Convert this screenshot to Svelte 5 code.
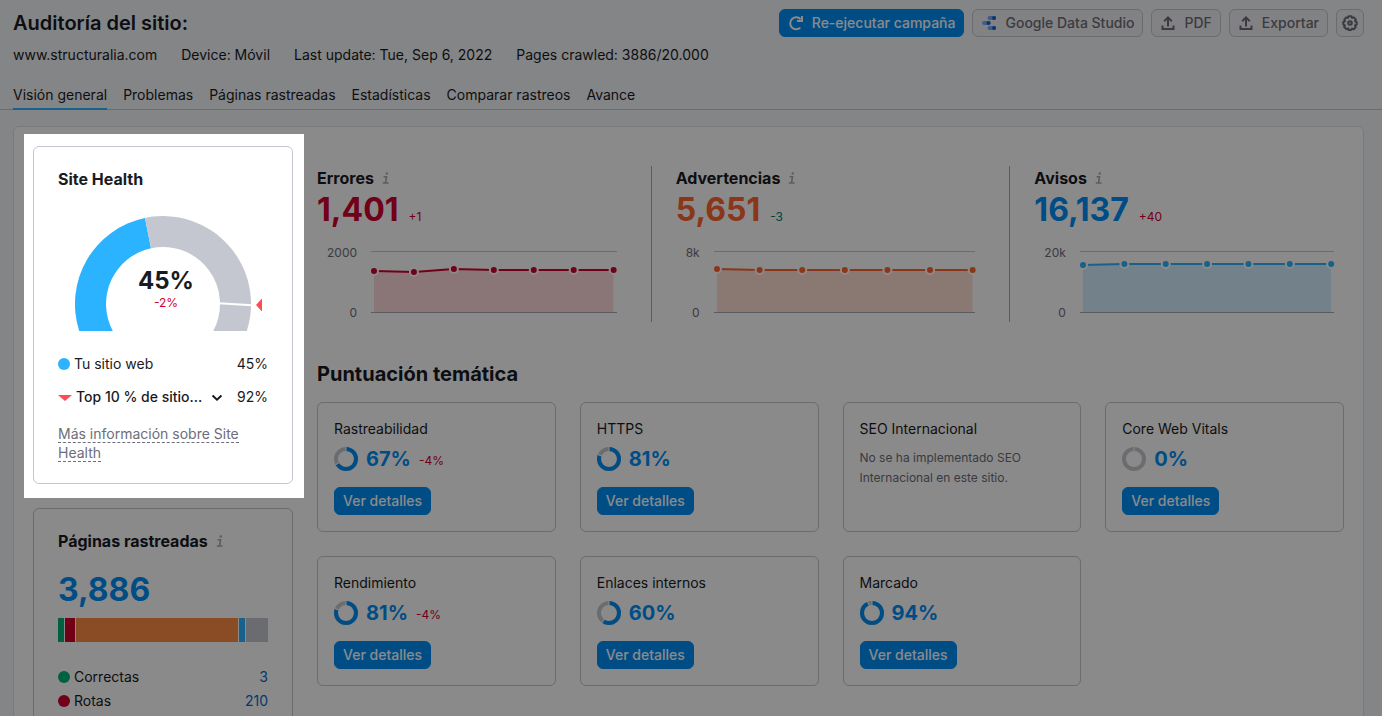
<script lang="ts">
  const details = [
    'www.structuralia.com',
    'Device: Móvil',
    'Last update: Tue, Sep 6, 2022',
    'Pages crawled: 3886/20.000',
  ];

  const tabs = [
    'Visión general',
    'Problemas',
    'Páginas rastreadas',
    'Estadísticas',
    'Comparar rastreos',
    'Avance',
  ];

  // points are distances from the top grid line, the plot is 60 high
  const stats = [
    { name: 'Errores', value: '1,401', diff: '+1', diffTone: 'bad', tone: 'red', max: '2000', points: [19, 20, 17, 18, 18, 18, 18] },
    { name: 'Advertencias', value: '5,651', diff: '-3', diffTone: 'good', tone: 'orange', max: '8k', points: [17, 18, 18, 18, 18, 18, 18] },
    { name: 'Avisos', value: '16,137', diff: '+40', diffTone: 'bad', tone: 'blue', max: '20k', points: [13, 12, 12, 12, 12, 12, 12] },
  ];

  const topics = [
    { name: 'Rastreabilidad', score: 67, diff: '-4%' },
    { name: 'HTTPS', score: 81 },
    { name: 'SEO Internacional', note: 'No se ha implementado SEO Internacional en este sitio.' },
    { name: 'Core Web Vitals', score: 0 },
    { name: 'Rendimiento', score: 81, diff: '-4%' },
    { name: 'Enlaces internos', score: 60 },
    { name: 'Marcado', score: 94 },
  ];

  const segments = [
    { color: '#00b37a', size: 6 },
    { color: '#d1002f', size: 10 },
    { color: '#ff8c43', size: 162 },
    { color: '#2bb3ff', size: 6 },
    { color: '#c4c7cf', size: 22 },
  ];

  const pages = [
    { name: 'Correctas', count: 3, color: '#00b37a' },
    { name: 'Rotas', count: 210, color: '#d1002f' },
  ];

  function linePoints(points: number[]) {
    return points.map((y, i) => `${(i * 100) / (points.length - 1)},${y}`).join(' ');
  }
</script>

{#snippet info()}
  <svg class="info" width="8" height="12" viewBox="0 0 8 12" aria-hidden="true">
    <circle cx="4.8" cy="1.4" r="1.2" fill="currentColor" />
    <path d="M1.6 4.7h2.9L3.5 10.8M.8 11h5.8" fill="none" stroke="currentColor" stroke-width="1.6" />
  </svg>
{/snippet}

{#snippet upload()}
  <svg width="16" height="16" viewBox="0 0 16 16" fill="none" stroke="currentColor" stroke-width="2" aria-hidden="true">
    <path d="M2.5 10.5V14h11v-3.5M8 11.5V2.5M4.2 6.2 8 2.4l3.8 3.8" />
  </svg>
{/snippet}

<div class="page">
  <header>
    <div class="top">
      <h1>Auditoría del sitio:</h1>
      <div class="actions">
        <button class="btn primary">
          <svg width="16" height="16" viewBox="0 0 16 16" fill="none" stroke="currentColor" stroke-width="2" aria-hidden="true">
            <path d="M12.4 12.6A6 6 0 1 1 12.6 4.2M14 1v5H9" />
          </svg>
          Re-ejecutar campaña
        </button>
        <button class="btn">
          <svg width="16" height="16" viewBox="0 0 16 16" stroke-linecap="round" stroke-width="4" aria-hidden="true">
            <path d="M8.5 3H13M3 8h4.5M8.5 13H13" stroke="#7baaf7" />
            <path d="M13 3h.1M7.5 8h.1M13 13h.1" stroke="#1a5fd0" />
          </svg>
          Google Data Studio
        </button>
        <button class="btn">{@render upload()}PDF</button>
        <button class="btn">{@render upload()}Exportar</button>
        <button class="btn icon" aria-label="Ajustes">
          <svg width="16" height="16" viewBox="0 0 16 16" fill="none" stroke="currentColor" stroke-width="2" stroke-linejoin="round" aria-hidden="true">
            <path d="M6.5 1.2h3l.6 1.7 1.8-.5 1.9 2.3-.8 1.6 1.7.8v2.4l-1.7.9.7 1.8-2 2-1.7-.6-.9 1.4H6.7L6 13.4l-1.7.7-2.1-2.1.7-1.7-1.6-.8V7l1.6-.7-.6-1.7 1.9-2.2 1.7.5z" />
            <circle cx="8" cy="8" r="1.8" />
          </svg>
        </button>
      </div>
    </div>
    <div class="details">
      {#each details as item}
        <span>{item}</span>
      {/each}
    </div>
    <nav>
      {#each tabs as tab, i}
        <a href="#tab-{i}" class:active={i === 0}>{tab}</a>
      {/each}
    </nav>
  </header>

  <main>
    <aside>
      <div class="spotlight">
        <section class="card health">
          <h3>Site Health</h3>
          <svg class="gauge" viewBox="0 0 210 115" role="img" aria-label="Site Health 45%">
            <path d="M21.2 115A88 88 0 0 1 87 1.9L93 32.3A57 57 0 0 0 54.8 115z" fill="#2bb3ff" />
            <path d="M87 1.9A88 88 0 0 1 188.8 115H155.2A57 57 0 0 0 93 32.3z" fill="#c4c7cf" />
            <path d="M161 87.3L194 89.3" stroke="#fff" stroke-width="2" />
            <path d="M198 89l6-6.5v13z" fill="#ff4953" />
            <text class="gauge-value" x="108" y="73">45%</text>
            <text class="gauge-diff" x="108" y="91">-2%</text>
          </svg>
          <div class="row">
            <span class="dot" style="background: #2bb3ff"></span>
            <span>Tu sitio web</span>
            <span class="count">45%</span>
          </div>
          <div class="row top-row">
            <svg width="14" height="8" viewBox="0 0 14 8" aria-hidden="true"><path d="M0 2h14L7 8z" fill="#ff4953" /></svg>
            <div class="picker">
              <select aria-label="Comparar con">
                <option>Top 10 % de sitio...</option>
              </select>
              <svg width="12" height="12" viewBox="0 0 12 12" fill="none" stroke="currentColor" stroke-width="2" aria-hidden="true">
                <path d="M1.5 4.5 6 8.7 10.5 4.5" />
              </svg>
            </div>
            <span class="count">92%</span>
          </div>
          <p class="more"><a href="#site-health">Más información sobre Site Health</a></p>
        </section>
      </div>

      <section class="card crawled">
        <h3>Páginas rastreadas {@render info()}</h3>
        <a class="big blue" href="#pages">3,886</a>
        <div class="bar">
          {#each segments as segment}
            <span style="flex-grow: {segment.size}; background: {segment.color}"></span>
          {/each}
        </div>
        {#each pages as page}
          <div class="row">
            <span class="dot" style="background: {page.color}"></span>
            <span>{page.name}</span>
            <a class="count" href="#pages">{page.count}</a>
          </div>
        {/each}
      </section>
    </aside>

    <div class="content">
      <div class="stats">
        {#each stats as stat}
          <section class="stat {stat.tone}">
            <h3>{stat.name} {@render info()}</h3>
            <div class="figure">
              <a class="big" href="#issues">{stat.value}</a>
              <span class="diff {stat.diffTone}">{stat.diff}</span>
            </div>
            <div class="chart">
              <div class="axis"><span>{stat.max}</span><span>0</span></div>
              <div class="plot">
                <svg class="lines" width="100%" height="60" aria-hidden="true">
                  <svg width="100%" height="60" viewBox="0 0 100 60" preserveAspectRatio="none">
                    <polygon class="area" points="0,60 {linePoints(stat.points)} 100,60" />
                    <polyline points={linePoints(stat.points)} fill="none" stroke="currentColor" stroke-width="2" vector-effect="non-scaling-stroke" />
                  </svg>
                  {#each stat.points as y, i}
                    <circle cx="{(i * 100) / 6}%" cy={y} r="4" fill="currentColor" stroke="#fff" stroke-width="2" />
                  {/each}
                </svg>
              </div>
            </div>
          </section>
        {/each}
      </div>

      <h2>Puntuación temática</h2>
      <div class="topics">
        {#each topics as topic}
          <section class="card topic">
            <h4>{topic.name}</h4>
            {#if topic.note}
              <p class="note">{topic.note}</p>
            {:else}
              <div class="score">
                <svg width="24" height="24" viewBox="0 0 24 24" fill="none" stroke-width="4" aria-hidden="true">
                  <g transform="rotate(-90 12 12)">
                    <circle cx="12" cy="12" r="10" stroke="#c4c7cf" />
                    <circle cx="12" cy="12" r="10" pathLength="100" stroke="#008ff8" stroke-dasharray="{topic.score} 100" />
                    <path d="M18 12h6" stroke="#fff" stroke-width="1" />
                    {#if topic.score}
                      <path d="M18 12h6" stroke="#fff" stroke-width="1" transform="rotate({topic.score * 3.6} 12 12)" />
                    {/if}
                  </g>
                </svg>
                <strong>{topic.score}%</strong>
                {#if topic.diff}
                  <span class="diff bad">{topic.diff}</span>
                {/if}
              </div>
              <button class="btn primary">Ver detalles</button>
            {/if}
          </section>
        {/each}
      </div>
    </div>
  </main>
</div>

<style>
  :global(body) {
    background: #f4f5f9;
  }

  .page {
    height: 100vh;
    overflow: hidden;
    background: #f4f5f9;
    color: #191b23;
    font-family: Inter, "Liberation Sans", sans-serif;
    font-size: 14px;
    line-height: 20px;
  }

  .page :global(*) {
    box-sizing: border-box;
  }

  h1, h2, h3, h4, p {
    margin: 0;
  }

  a {
    color: inherit;
    text-decoration: none;
  }

  header {
    border-bottom: 1px solid #c4c7cf;
    padding: 9px 18px 0 13px;
  }

  .top {
    display: flex;
    justify-content: space-between;
    align-items: center;
  }

  h1 {
    font-size: 20px;
    font-weight: 600;
  }

  .actions {
    display: flex;
    gap: 8px;
  }

  .btn {
    display: inline-flex;
    align-items: center;
    justify-content: center;
    gap: 8px;
    height: 28px;
    padding: 0 8px 1px;
    border: 1px solid #c4c7cf;
    border-radius: 6px;
    background: #f0f0f4;
    color: #6c6e79;
    font-family: inherit;
    font-size: 14px;
    font-weight: 500;
    white-space: nowrap;
    cursor: pointer;
  }

  .btn.primary {
    border-color: #008ff8;
    background: #008ff8;
    color: #fff;
  }

  .btn.icon {
    width: 28px;
    padding: 0;
  }

  .details {
    display: flex;
    gap: 24px;
    padding-top: 8px;
  }

  nav {
    display: flex;
    gap: 16px;
    margin-top: 20px;
  }

  nav a {
    height: 25px;
    margin-bottom: -1px;
  }

  nav a.active {
    border-bottom: 2px solid #2bb3ff;
  }

  main {
    display: flex;
    gap: 24px;
    margin: 16px 18px 0 13px;
    padding: 19px;
    border: 1px solid #e0e1e9;
    border-radius: 6px;
    background: #fff;
  }

  aside {
    display: flex;
    flex-direction: column;
    flex: 0 0 260px;
    gap: 24px;
  }

  .card {
    border: 1px solid #c4c7cf;
    border-radius: 6px;
  }

  /* everything outside the highlighted card is dimmed */
  .spotlight {
    position: relative;
    z-index: 1;
    margin: -12px -11px -14px -9px;
    padding: 12px 11px 14px 9px;
    background: #fff;
    box-shadow: 0 0 0 200vmax rgba(0, 0, 0, 0.46);
  }

  .health {
    padding: 22px 24px 21px;
  }

  h3 {
    font-size: 16px;
    font-weight: 700;
    line-height: 20px;
  }

  .info {
    margin-left: 4px;
    color: #a9abb6;
  }

  .gauge {
    display: block;
    width: 100%;
    margin: 27px 0 23px;
  }

  .gauge text {
    text-anchor: middle;
  }

  .gauge-value {
    fill: #191b23;
    font-size: 24px;
    font-weight: 700;
  }

  .gauge-diff {
    fill: #d1002f;
    font-size: 12px;
  }

  .row {
    display: flex;
    align-items: center;
    gap: 4px;
    height: 20px;
  }

  .dot {
    width: 12px;
    height: 12px;
    border-radius: 50%;
  }

  .count {
    margin-left: auto;
  }

  .top-row {
    margin-top: 13px;
  }

  .picker {
    display: grid;
    grid-template-columns: 1fr 12px;
    align-items: center;
    width: 147px;
  }

  .picker select {
    grid-area: 1 / 1 / 2 / 3;
    width: 100%;
    padding: 0;
    border: 0;
    appearance: none;
    background: none;
    color: inherit;
    font: inherit;
    font-weight: 500;
  }

  .picker svg {
    grid-area: 1 / 2;
    pointer-events: none;
  }

  .more {
    margin-top: 17px;
    color: #6c6e79;
    line-height: 19px;
  }

  .more a {
    border-bottom: 1px dashed #6c6e79;
  }

  .crawled {
    padding: 22px 24px;
  }

  .big {
    font-size: 32px;
    font-weight: 700;
    line-height: 40px;
  }

  .crawled .big {
    display: block;
    margin-top: 19px;
  }

  .bar {
    display: flex;
    gap: 1px;
    height: 24px;
    margin: 8px 0 25px;
  }

  .bar span {
    flex-basis: 0;
  }

  .crawled .row {
    margin-bottom: 4px;
  }

  .crawled .count {
    color: #006dca;
  }

  .content {
    flex: 1;
    min-width: 0;
    padding-top: 20px;
  }

  .stats {
    display: flex;
  }

  .stat {
    flex: 1 1 0;
    height: 156px;
    padding-top: 2px;
  }

  .stat:not(:last-child) {
    margin-right: 24px;
    padding-right: 24px;
    border-right: 1px solid #a9abb6;
  }

  .figure {
    display: flex;
    align-items: baseline;
    gap: 10px;
    margin-top: 2px;
  }

  .red .big,
  .red .plot {
    color: #d1002f;
  }

  .orange .big,
  .orange .plot {
    color: #ff642d;
  }

  .big.blue,
  .blue .big {
    color: #008ff8;
  }

  .blue .plot {
    color: #2bb3ff;
  }

  .area {
    fill: currentColor;
    opacity: 0.2;
  }

  .red .area {
    fill: #ff4953;
  }

  .diff {
    font-size: 12px;
  }

  .bad {
    color: #d1002f;
  }

  .good {
    color: #007c65;
  }

  .chart {
    display: flex;
    gap: 14px;
    margin-top: 21px;
    padding: 0 10px;
  }

  .axis {
    display: flex;
    flex-direction: column;
    justify-content: space-between;
    align-items: flex-end;
    margin: -8px 0 -10px;
    color: #6c6e79;
    font-size: 12px;
  }

  .plot {
    flex: 1;
    height: 62px;
    padding: 0 3px;
    border-top: 1px solid #c4c7cf;
    border-bottom: 1px solid #a9abb6;
  }

  .lines {
    display: block;
    overflow: visible;
  }

  h2 {
    margin: 40px 0 16px;
    font-size: 20px;
    font-weight: 700;
    line-height: 24px;
  }

  .topics {
    display: grid;
    grid-template-columns: repeat(4, 1fr);
    gap: 24px;
  }

  .topic {
    height: 130px;
    padding: 16px;
  }

  h4 {
    font-size: 14px;
    font-weight: 400;
  }

  .score {
    display: flex;
    align-items: center;
    gap: 8px;
    height: 24px;
    margin: 8px 0 16px;
  }

  .score strong {
    color: #008ff8;
    font-size: 20px;
    font-weight: 700;
  }

  .score .diff {
    padding-top: 4px;
  }

  .note {
    margin-top: 9px;
    color: #6c6e79;
    font-size: 12px;
  }
</style>
